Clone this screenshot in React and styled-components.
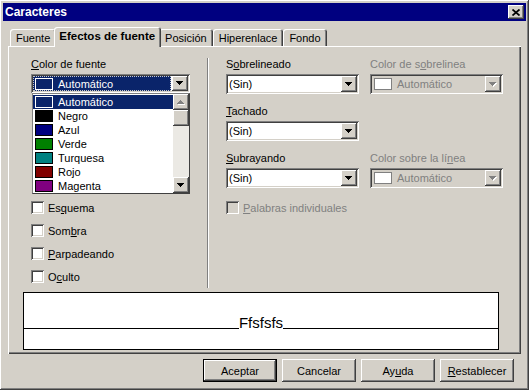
import React from 'react'
import styled, { createGlobalStyle } from 'styled-components'

const GlobalStyle = createGlobalStyle`
  html, body {
    margin: 0;
    padding: 0;
    background: #d4d0c8;
  }
  body {
    font-family: "Liberation Sans", Arial, sans-serif;
    font-size: 11px;
    color: #000;
  }
`

const raised = `
  box-shadow: inset -1px -1px #404040, inset 1px 1px #fff,
    inset -2px -2px #808080, inset 2px 2px #d4d0c8;
`
const sunken = `
  box-shadow: inset 1px 1px #808080, inset -1px -1px #fff,
    inset 2px 2px #404040, inset -2px -2px #d4d0c8;
`

const Window = styled.div`
  width: 529px;
  height: 390px;
  box-sizing: border-box;
  padding: 3px;
  background: #d4d0c8;
  display: flex;
  flex-direction: column;
  ${raised}
`

const TitleBar = styled.div`
  height: 18px;
  background: #000080;
  display: flex;
  align-items: center;
  justify-content: space-between;
  padding: 0 2px;
`

const Title = styled.span`
  color: #fff;
  font-weight: bold;
  font-size: 12px;
`

const CloseButton = styled.div`
  width: 16px;
  height: 14px;
  background: #d4d0c8;
  display: flex;
  align-items: center;
  justify-content: center;
  ${raised}
`

const Body = styled.div`
  padding: 6px 5px 0;
  display: flex;
  flex-direction: column;
`

const TabStrip = styled.div`
  height: 19px;
  display: flex;
  align-items: flex-end;
  padding-left: 2px;
  position: relative;
  z-index: 1;
`

const Tab = styled.div`
  height: ${p => (p.$active ? '20px' : '17px')};
  margin: ${p => (p.$active ? '0 -2px -1px' : '0')};
  padding: ${p => (p.$active ? '0 6px 2px 5px' : '0 6px')};
  box-sizing: border-box;
  background: #d4d0c8;
  border-radius: 3px 3px 0 0;
  display: flex;
  align-items: center;
  font-weight: ${p => (p.$active ? 'bold' : 'normal')};
  font-size: ${p => (p.$active ? '11.5px' : '11px')};
  position: relative;
  z-index: ${p => (p.$active ? 2 : 1)};
  box-shadow: inset 1px 1px #fff, inset -1px 0 #404040, inset -2px 0 #808080;
`

const Panel = styled.div`
  height: 308px;
  box-sizing: border-box;
  padding: 12px 0 0 23px;
  box-shadow: inset 1px 1px #fff, inset -1px -1px #404040, inset -2px -2px #808080;
`

const TopGrid = styled.div`
  height: 230px;
  display: grid;
  grid-template-columns: 159px 2px 1fr;
  column-gap: 17px;
`

const Separator = styled.div`
  border-left: 1px solid #808080;
  border-right: 1px solid #fff;
`

const Column = styled.div`
  display: flex;
  flex-direction: column;
`

const Label = styled.div`
  height: 13px;
  line-height: 13px;
  margin-bottom: 3px;
  white-space: nowrap;
  color: ${p => (p.$disabled ? '#808080' : '#000')};
`

const U = styled.span`
  text-decoration: underline;
`

const ComboWrap = styled.div`
  position: relative;
`

const ComboBox = styled.div`
  height: ${p => p.$h || 20}px;
  box-sizing: border-box;
  padding: 2px;
  display: flex;
  align-items: stretch;
  background: ${p => (p.$disabled ? '#d4d0c8' : '#fff')};
  ${sunken}
`

const ComboValue = styled.div`
  flex: 1;
  display: flex;
  align-items: center;
  padding-left: ${p => (p.$swatch ? '0' : '1px')};
  color: ${p => (p.$focused ? '#fff' : p.$disabled ? '#808080' : '#000')};
  background: ${p => (p.$focused ? '#0a246a' : 'transparent')};
  outline: ${p => (p.$focused ? '1px dotted #c8c8c8' : 'none')};
  outline-offset: -1px;
  margin-right: ${p => (p.$focused ? '1px' : '0')};
  white-space: nowrap;
`

const ArrowButton = styled.div`
  width: 16px;
  background: #d4d0c8;
  display: flex;
  align-items: center;
  justify-content: center;
  ${raised}
`

const Swatch = styled.span`
  width: 18px;
  height: 12px;
  box-sizing: border-box;
  flex: none;
  margin: 0 5px 0 2px;
  border: 1px solid ${p => p.$line};
  background: ${p => p.$fill};
`

const DropList = styled.div`
  position: absolute;
  top: 100%;
  left: 1px;
  width: 158px;
  height: 101px;
  box-sizing: border-box;
  background: #fff;
  border: 1px solid #404040;
  border-top-color: #808080;
  border-left-color: #808080;
  display: flex;
  z-index: 5;
`

const ListBody = styled.div`
  flex: 1;
  display: flex;
  flex-direction: column;
  padding-top: 1px;
`

const ListItem = styled.div`
  height: 14px;
  display: flex;
  align-items: center;
  white-space: nowrap;
  background: ${p => (p.$selected ? '#0a246a' : 'transparent')};
  color: ${p => (p.$selected ? '#fff' : '#000')};
`

const ScrollBar = styled.div`
  width: 16px;
  display: flex;
  flex-direction: column;
  background: #ebe9e4;
`

const ScrollButton = styled.div`
  height: 16px;
  flex: none;
  background: #d4d0c8;
  display: flex;
  align-items: center;
  justify-content: center;
  ${raised}
`

const ScrollTrack = styled.div`
  flex: 1;
`

const CheckList = styled.div`
  display: flex;
  flex-direction: column;
  gap: 10px;
  margin-top: ${p => p.$top || 0}px;
`

const CheckRow = styled.label`
  height: 13px;
  display: flex;
  align-items: center;
  gap: 4px;
  white-space: nowrap;
  color: ${p => (p.$disabled ? '#808080' : '#000')};
`

const CheckBox = styled.span`
  width: 13px;
  height: 13px;
  flex: none;
  box-sizing: border-box;
  background: ${p => (p.$disabled ? '#d4d0c8' : '#fff')};
  ${sunken}
`

const RightGrid = styled.div`
  display: grid;
  grid-template-columns: 133px 133px;
  column-gap: 11px;
  row-gap: 11px;
  align-content: start;
`

const Wide = styled.div`
  grid-column: 1 / span 2;
  margin-top: 2px;
`

const Preview = styled.div`
  width: 476px;
  height: 58px;
  margin: 4px 0 0 -8px;
  box-sizing: border-box;
  border: 1px solid #000;
  background: #fff;
`

const PreviewRow = styled.div`
  height: 36px;
  display: flex;
  align-items: flex-end;
`

const BaseLine = styled.div`
  flex: 1;
  align-self: stretch;
  border-bottom: 1px solid #000;
`

const Sample = styled.span`
  font-size: 15px;
  line-height: 15px;
  margin-bottom: -1px;
`

const ButtonBar = styled.div`
  margin-top: 5px;
  display: flex;
  justify-content: flex-end;
  gap: 5px;
  padding-right: 7px;
`

const Button = styled.button`
  width: 74px;
  height: 23px;
  border: none;
  padding: 0;
  background: #d4d0c8;
  font-family: inherit;
  font-size: 11px;
  color: #000;
  ${p =>
    p.$default
      ? `box-shadow: inset 0 0 0 1px #000, inset -2px -2px #404040, inset 2px 2px #fff, inset -3px -3px #808080;`
      : raised}
`

const Triangle = ({ up, disabled }) => (
  <svg width="8" height="5" viewBox="0 0 8 5" shapeRendering="crispEdges">
    {disabled && (
      <polygon
        points={up ? '3,0 4,0 7,4 0,4' : '0,0 7,0 4,4 3,4'}
        fill="#fff"
        transform="translate(1,1)"
      />
    )}
    <polygon
      points={up ? '3,0 4,0 7,4 0,4' : '0,0 7,0 4,4 3,4'}
      fill={disabled ? '#808080' : '#000'}
    />
  </svg>
)

const Combo = ({ value, swatch, disabled, focused, h }) => (
  <ComboBox $disabled={disabled} $h={h}>
    <ComboValue $focused={focused} $disabled={disabled} $swatch={swatch}>
      {swatch && (
        <Swatch
          $line={focused ? '#fff' : '#808080'}
          $fill={focused ? 'transparent' : '#fff'}
        />
      )}
      {value}
    </ComboValue>
    <ArrowButton>
      <Triangle disabled={disabled} />
    </ArrowButton>
  </ComboBox>
)

const fontColors = [
  { name: 'Automático', color: null },
  { name: 'Negro', color: '#000000' },
  { name: 'Azul', color: '#000080' },
  { name: 'Verde', color: '#008000' },
  { name: 'Turquesa', color: '#008080' },
  { name: 'Rojo', color: '#800000' },
  { name: 'Magenta', color: '#800080' },
]

const effects = [
  <>Es<U>q</U>uema</>,
  <>Som<U>b</U>ra</>,
  <><U>P</U>arpadeando</>,
  <>O<U>c</U>ulto</>,
]

const tabs = ['Fuente', 'Efectos de fuente', 'Posición', 'Hiperenlace', 'Fondo']

export default function App() {
  return (
    <>
      <GlobalStyle />
      <Window>
        <TitleBar>
          <Title>Caracteres</Title>
          <CloseButton>
            <svg width="8" height="7" viewBox="0 0 8 7">
              <path d="M0.5 0.5 L7.5 6.5 M7.5 0.5 L0.5 6.5" stroke="#000" strokeWidth="1.7" />
            </svg>
          </CloseButton>
        </TitleBar>
        <Body>
          <TabStrip>
            {tabs.map(t => (
              <Tab key={t} $active={t === 'Efectos de fuente'}>
                {t}
              </Tab>
            ))}
          </TabStrip>
          <Panel>
            <TopGrid>
              <Column>
                <Label>
                  <U>C</U>olor de fuente
                </Label>
                <ComboWrap>
                  <Combo value="Automático" swatch focused h={19} />
                  <DropList>
                    <ListBody>
                      {fontColors.map(c => (
                        <ListItem key={c.name} $selected={!c.color}>
                          <Swatch
                            $line={c.color ? '#000' : '#fff'}
                            $fill={c.color || 'transparent'}
                          />
                          {c.name}
                        </ListItem>
                      ))}
                    </ListBody>
                    <ScrollBar>
                      <ScrollButton>
                        <Triangle up disabled />
                      </ScrollButton>
                      <ScrollButton />
                      <ScrollTrack />
                      <ScrollButton>
                        <Triangle />
                      </ScrollButton>
                    </ScrollBar>
                  </DropList>
                </ComboWrap>
                <CheckList $top={108}>
                  {effects.map((e, i) => (
                    <CheckRow key={i}>
                      <CheckBox />
                      <span>{e}</span>
                    </CheckRow>
                  ))}
                </CheckList>
              </Column>
              <Separator />
              <RightGrid>
                <div>
                  <Label>
                    S<U>o</U>brelineado
                  </Label>
                  <Combo value="(Sin)" />
                </div>
                <div>
                  <Label $disabled>
                    Color de s<U>o</U>brelinea
                  </Label>
                  <Combo value="Automático" swatch disabled />
                </div>
                <div>
                  <Label>
                    <U>T</U>achado
                  </Label>
                  <Combo value="(Sin)" />
                </div>
                <div />
                <div>
                  <Label>
                    <U>S</U>ubrayando
                  </Label>
                  <Combo value="(Sin)" />
                </div>
                <div>
                  <Label $disabled>
                    Color sobre la lí<U>n</U>ea
                  </Label>
                  <Combo value="Automático" swatch disabled />
                </div>
                <Wide>
                  <CheckRow $disabled>
                    <CheckBox $disabled />
                    <span>
                      <U>P</U>alabras individuales
                    </span>
                  </CheckRow>
                </Wide>
              </RightGrid>
            </TopGrid>
            <Preview>
              <PreviewRow>
                <BaseLine />
                <Sample>Ffsfsfs</Sample>
                <BaseLine />
              </PreviewRow>
            </Preview>
          </Panel>
          <ButtonBar>
            <Button $default>Aceptar</Button>
            <Button>Cancelar</Button>
            <Button>
              Ay<U>u</U>da
            </Button>
            <Button>
              <U>R</U>establecer
            </Button>
          </ButtonBar>
        </Body>
      </Window>
    </>
  )
}
